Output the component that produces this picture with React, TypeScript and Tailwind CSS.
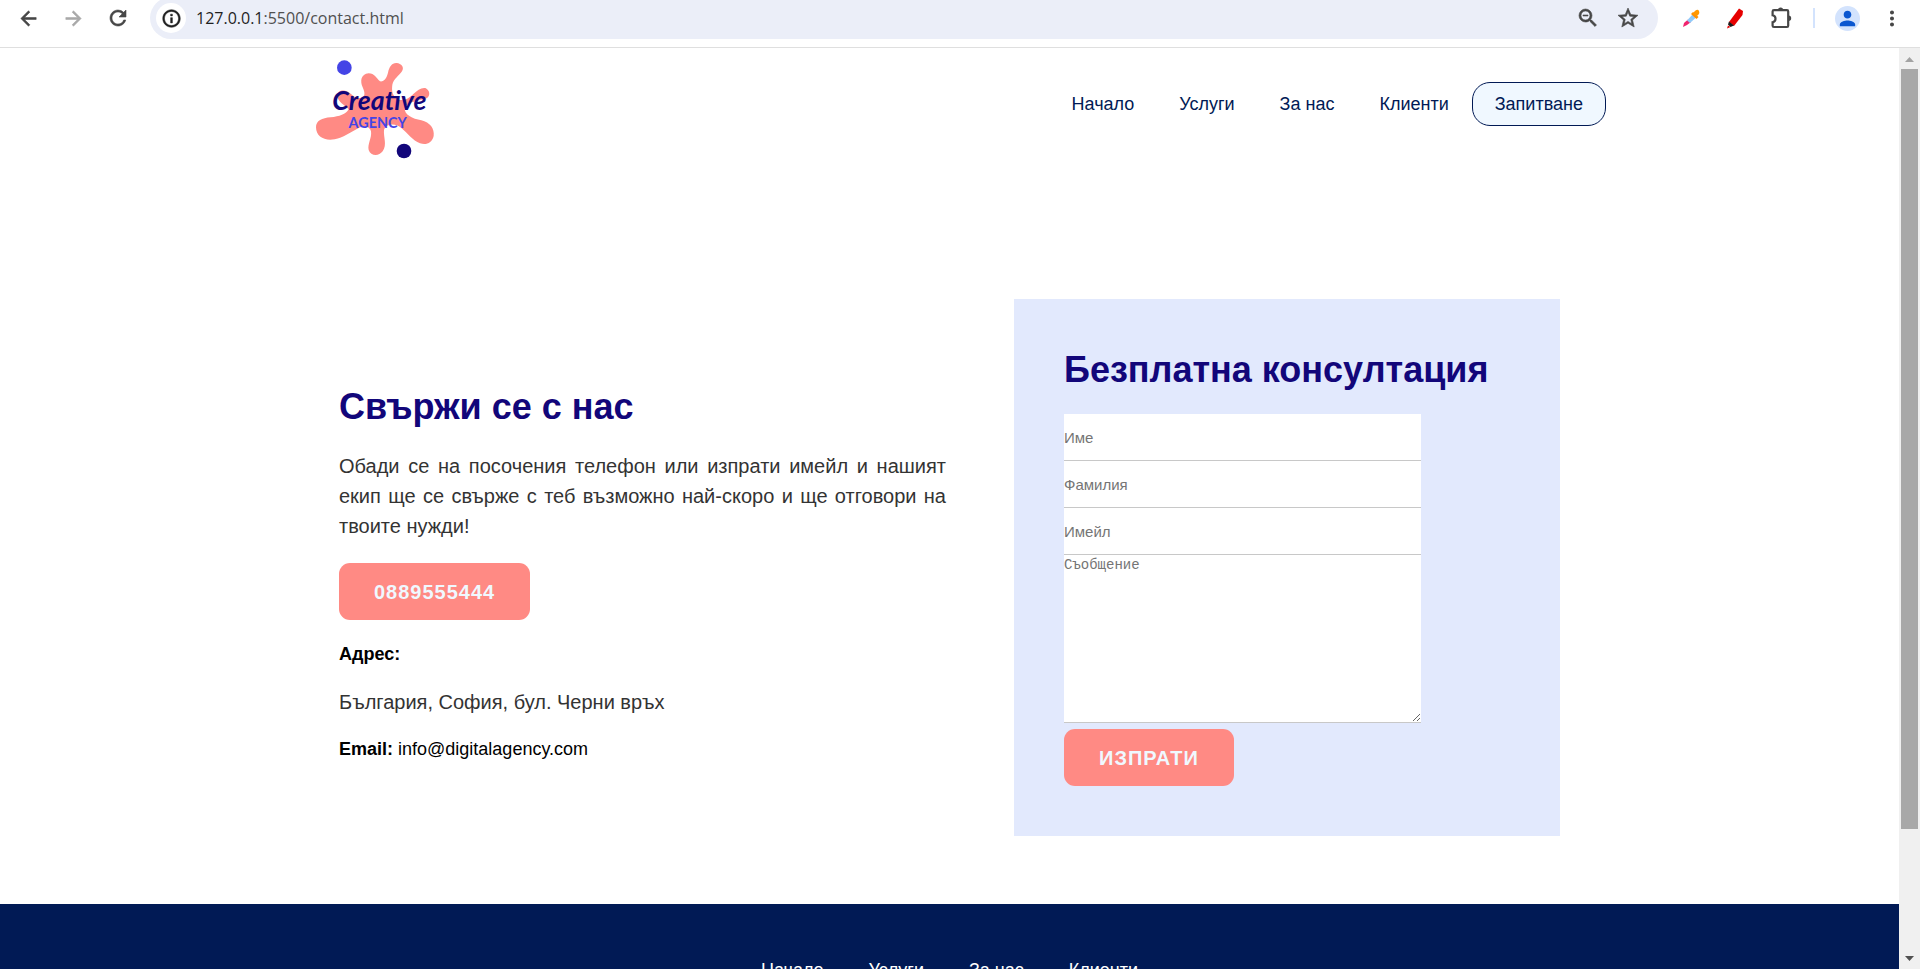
import type { ReactNode } from "react";
import {
  MdArrowBack,
  MdArrowForward,
  MdInfoOutline,
  MdMoreVert,
  MdPerson,
  MdRefresh,
  MdStarBorder,
  MdZoomOut,
} from "react-icons/md";

const links = ["Начало", "Услуги", "За нас", "Клиенти"];

function IconButton({ label, children }: { label: string; children: ReactNode }) {
  return (
    <button
      type="button"
      aria-label={label}
      className="flex size-6 items-center justify-center [&_path[d^='M0_0h24']]:hidden"
    >
      {children}
    </button>
  );
}

// Hides the icon set's transparent bounding path so that only the glyph is stroked.
const boldIcon = "stroke-current [stroke-width:0.6] [&>path[fill=none]]:hidden";

function BrowserBar() {
  return (
    <header className="flex h-12 shrink-0 items-start overflow-hidden border-b border-[#dfdfdf] bg-white text-[#474747]">
      <div className="flex h-9 items-center gap-[21px] pl-4">
        <IconButton label="Back">
          <MdArrowBack size={23} className={boldIcon} />
        </IconButton>
        <IconButton label="Forward">
          <MdArrowForward size={23} className={`text-[#a9a9a9] ${boldIcon}`} />
        </IconButton>
        <IconButton label="Reload">
          <MdRefresh size={24} className={boldIcon} />
        </IconButton>
      </div>
      <div className="-mt-[3px] ml-5 flex h-[42px] flex-1 items-center rounded-full bg-[#ebeef8] pr-[18px] pl-[6px]">
        <button
          type="button"
          aria-label="Site information"
          className="flex size-[30px] items-center justify-center rounded-full bg-white text-[#1f1f1f]"
        >
          <MdInfoOutline size={21} className={boldIcon} />
        </button>
        <p className="flex-1 pl-[10px] font-['Open_Sans',sans-serif] text-[16px] text-[#505050]">
          <span className="text-[#1f1f1f]">127.0.0.1</span>:5500/contact.html
        </p>
        <div className="flex gap-4">
          <IconButton label="Zoom">
            <MdZoomOut size={24} className={boldIcon} />
          </IconButton>
          <IconButton label="Bookmark">
            <MdStarBorder size={24} className={boldIcon} />
          </IconButton>
        </div>
      </div>
      <div className="flex h-9 items-center pr-4 pl-[22px]">
        <IconButton label="Colour picker">
          <svg viewBox="0 0 24 24" className="size-6">
            <path d="M3 21 L4 17 L8 13.500 L11 16 L7 19 Z" fill="#f0246e" />
            <path d="M7 14.500 L12.500 8.500 L16 11.500 L10 17 Z" fill="#90caf9" />
            <path d="M11 8 L13 6 L18.500 11 L16.500 13 Z" fill="#ff8f00" />
            <path d="M13 7 L15.500 4.500 Q18 3 19 5 Q20 7 18.500 8.500 L16.500 10.500 Z" fill="#ff9800" />
          </svg>
        </IconButton>
        <span className="w-5" />
        <IconButton label="Highlighter">
          <svg viewBox="0 0 24 24" className="size-6">
            <path d="M15 2.500 L19 5 L18.500 9 L10 20 L5 16 Z" fill="#e60000" />
            <path d="M5 15.500 L10 19.500 L6.500 21 L4 18.500 Z" fill="#1b1b1b" />
            <path d="M4 19.500 L6.500 21 L3 22.500 Z" fill="#e60000" />
          </svg>
        </IconButton>
        <span className="w-[21px]" />
        <IconButton label="Extensions">
          <svg viewBox="0 0 24 24" className="size-6">
            <path
              d="M5 4.200 H18 Q19.200 4.200 19.200 5.400 V19.800 Q19.200 21 18 21 H5 Q3.600 21 3.600 19.800 V16.200 Q6.500 15.500 6.500 12.700 Q6.500 10 3.600 9.300 V5.400 Q3.600 4.200 5 4.200 Z"
              fill="none"
              stroke="#474747"
              strokeWidth="2.200"
            />
            <path d="M9 4 a2.600 2.600 0 0 1 5.200 0 Z M19.500 9.600 a2.700 2.700 0 0 1 0 5.400 Z" fill="#474747" />
          </svg>
        </IconButton>
        <span className="ml-5 h-5 w-[2px] bg-[#d3e3fd]" />
        <button
          type="button"
          aria-label="Profile"
          className="ml-5 flex size-[25px] items-center justify-center rounded-full bg-[#d3e3fd] text-[#0b57d0]"
        >
          <MdPerson size={23} />
        </button>
        <span className="w-5" />
        <IconButton label="Menu">
          <MdMoreVert size={25} />
        </IconButton>
      </div>
    </header>
  );
}

function Logo() {
  return (
    <svg viewBox="-21 -6 450 336" className="h-28 w-[150px]" role="img" aria-label="Creative Agency">
      <path
        d="M48 232 C48 212 66 204 92 202 C118 200 138 192 146 178 C138 168 112 154 111 137 C112 120 136 116 150 130 C160 139 170 146 183 144 C198 140 194 126 188 112 C180 94 182 72 206 70 C224 70 228 84 240 94 C252 96 260 84 264 68 C268 50 276 38 290 39 C304 40 314 52 306 64 C298 76 280 88 277 104 C275 120 276 134 288 143 C306 158 326 146 340 132 C352 120 364 112 376 114 C390 120 392 138 380 145 C362 152 322 154 314 174 C312 194 338 206 364 211 C390 217 404 236 401 258 C396 280 378 286 360 280 C338 272 322 248 304 234 C290 220 258 218 252 240 C250 262 262 284 248 304 C236 320 212 318 206 300 C202 282 216 264 213 244 C210 230 192 224 172 236 C150 248 130 262 104 268 C74 274 48 260 48 232 Z"
        fill="#ff8a84"
      />
      <circle cx="133" cy="53" r="22" fill="#4444e6" />
      <circle cx="312" cy="303" r="22" fill="#12067a" />
      <text
        x="238"
        y="180"
        textAnchor="middle"
        fill="#12067a"
        fontFamily="Lato, sans-serif"
        fontWeight="700"
        fontStyle="italic"
        fontSize="80"
      >
        Creative
      </text>
      <text
        x="233"
        y="233"
        textAnchor="middle"
        fill="#4444e6"
        fontFamily="Lato, sans-serif"
        fontSize="43"
        fontWeight="700"
      >
        AGENCY
      </text>
    </svg>
  );
}

function SiteHeader() {
  return (
    <div className="mx-auto flex w-full max-w-[1313px] items-center justify-between">
      <a href="#home">
        <Logo />
      </a>
      <nav className="flex items-center gap-px text-[18px] text-[#011a55]">
        {links.map((link) => (
          <a key={link} href="#page" className="px-[22px]">
            {link}
          </a>
        ))}
        <a
          href="#inquiry"
          className="flex h-11 items-center rounded-[18px] border border-[#011a55] bg-[#f0f8ff] px-[22px]"
        >
          Запитване
        </a>
      </nav>
    </div>
  );
}

const heading = "text-[36px] leading-[41px] font-bold text-[#12067a]";
const actionButton =
  "flex h-[57px] items-center rounded-[11px] bg-[#ff8a84] px-[35px] text-[20px] font-bold tracking-wider text-[#f0f8ff]";
const field = "block w-full border-b border-[#c8c8c8] bg-white placeholder:text-[#757575]";

function ContactInfo() {
  return (
    <div className="flex flex-1 flex-col items-start justify-center pt-[11px]">
      <h2 className={heading}>Свържи се с нас</h2>
      <p className="mt-6 text-justify text-[20px] leading-[30px] text-[#333333]">
        Обади се на посочения телефон или изпрати имейл и нашият екип ще се свърже с теб възможно най-скоро и ще
        отговори на твоите нужди!
      </p>
      <a href="tel:0889555444" className={`mt-[22px] ${actionButton}`}>
        0889555444
      </a>
      <h3 className="mt-6 text-[18px] leading-[21px] font-bold text-black">Адрес:</h3>
      <p className="mt-[22px] text-[20px] leading-[30px] text-[#333333]">България, София, бул. Черни връх</p>
      <p className="mt-[22px] text-[18px] leading-[21px] text-black">
        <strong>Email:</strong> info@digitalagency.com
      </p>
    </div>
  );
}

function ContactForm() {
  return (
    <form className="w-[546px] bg-[#e2e9fd] p-[50px]" onSubmit={(event) => event.preventDefault()}>
      <h2 className={heading}>Безплатна консултация</h2>
      <div className="mt-6 w-[357px]">
        <input aria-label="Име" placeholder="Име" className={`h-[47px] text-[15px] ${field}`} />
        <input aria-label="Фамилия" placeholder="Фамилия" className={`h-[47px] text-[15px] ${field}`} />
        <input aria-label="Имейл" type="email" placeholder="Имейл" className={`h-[47px] text-[15px] ${field}`} />
        <textarea
          aria-label="Съобщение"
          placeholder="Съобщение"
          className={`h-[168px] resize pt-[2px] font-['Liberation_Mono',monospace] text-[14px] leading-4 ${field}`}
        />
      </div>
      <button type="submit" className={`mt-[6px] ${actionButton}`}>
        ИЗПРАТИ
      </button>
    </form>
  );
}

function Scrollbar() {
  return (
    <div className="flex w-[21px] shrink-0 flex-col items-center bg-[#f0f0f0]" aria-hidden="true">
      <svg viewBox="0 0 21 21" className="h-[21px] w-[21px] shrink-0">
        <path d="M6 14 L10.500 9 L15 14 Z" fill="#a3a3a3" />
      </svg>
      <div className="w-[17px] flex-[760] bg-[#a8a8a8]" />
      <div className="flex-[119]" />
      <svg viewBox="0 0 21 21" className="h-[21px] w-[21px] shrink-0">
        <path d="M6 8 L15 8 L10.500 13 Z" fill="#505050" />
      </svg>
    </div>
  );
}

export default function App() {
  return (
    <div className="flex h-screen flex-col overflow-hidden bg-white font-['Liberation_Sans',Arial,sans-serif]">
      <BrowserBar />
      <div className="flex min-h-0 flex-1">
        <div className="flex-1 overflow-hidden">
          <SiteHeader />
          <main className="mx-auto flex max-w-[1313px] gap-[68px] px-[46px] pt-[139px] pb-[68px]">
            <ContactInfo />
            <ContactForm />
          </main>
          <footer className="bg-[#011a55] pt-14 pb-16 text-[18px] leading-[21px] text-white">
            <nav className="flex justify-center gap-px">
              {links.map((link) => (
                <a key={link} href="#page" className="px-[22px]">
                  {link}
                </a>
              ))}
            </nav>
          </footer>
        </div>
        <Scrollbar />
      </div>
    </div>
  );
}
